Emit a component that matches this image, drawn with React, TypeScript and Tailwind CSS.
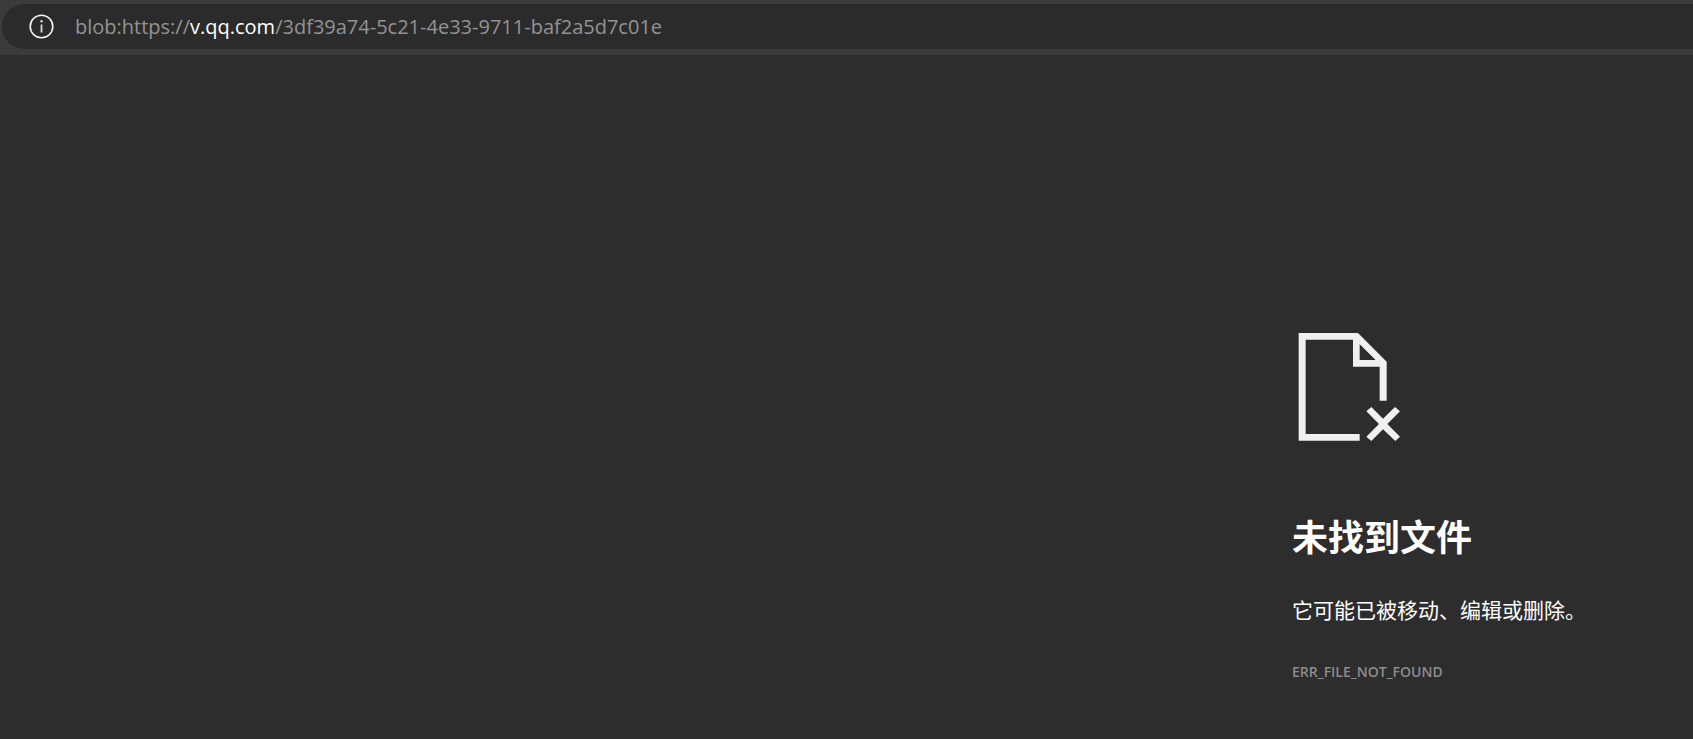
interface AddressParts {
  scheme: string;
  host: string;
  path: string;
}

const address: AddressParts = {
  scheme: "blob:https://",
  host: "v.qq.com",
  path: "/3df39a74-5c21-4e33-9711-baf2a5d7c01e",
};

function InfoIcon() {
  return (
    <svg viewBox="0 0 25 25" className="w-[25px] h-[25px]" fill="none" aria-hidden="true">
      <circle cx="12.5" cy="12.5" r="11.3" stroke="#f4f4f4" strokeWidth="1.6" />
      <path d="M12.5 10.5V18.5" stroke="#d8d8d8" strokeWidth="1.8" />
      <circle cx="12.5" cy="7.3" r="1.2" fill="#d8d8d8" />
    </svg>
  );
}

// Page outline with a folded corner and a cross at the lower right
function MissingFileIcon() {
  return (
    <svg viewBox="36 39 324 324" className="w-[108px] h-[108px]" fill="#f0f0f0" aria-hidden="true">
      <path
        fillRule="evenodd"
        d="M56 39H234L320 125V242H299V140H219V59H77V342H239V362H56ZM239 73V120H287Z"
      />
      <path d="M274 261L309 296L345 261L360 274L322 312L360 350L346 363L309 328L274 363L259 350L297 312L259 274Z" />
    </svg>
  );
}

function AddressBar({ scheme, host, path }: AddressParts) {
  return (
    <header className="bg-[#3b3b3b] pt-1 pb-1.5 pl-0.5">
      <div className="flex items-center h-[45px] pl-[27px] rounded-l-full bg-[#2b2b2b]">
        <button type="button" aria-label="查看站点信息" className="shrink-0">
          <InfoIcon />
        </button>
        <div
          role="textbox"
          aria-label="地址和搜索栏"
          contentEditable
          suppressContentEditableWarning
          spellCheck={false}
          className="flex-1 ml-[21px] text-[20px] leading-7 whitespace-nowrap text-[#939393] outline-none"
        >
          {scheme}
          <span className="text-white">{host}</span>
          {path}
        </div>
      </div>
    </header>
  );
}

export default function App() {
  return (
    <div className="min-h-screen bg-[#2d2d2d] font-['Open_Sans','Noto_Sans_CJK_SC',sans-serif]">
      <AddressBar {...address} />

      <main className="flex justify-end pt-[278px] pb-12">
        <section className="w-[401px]">
          <MissingFileIcon />
          <h1 className="mt-[73px] text-[36px] leading-12 font-bold text-white">未找到文件</h1>
          <p className="mt-[34px] text-[21px] leading-7 text-white">它可能已被移动、编辑或删除。</p>
          <p className="mt-9 text-[14px] leading-6 font-semibold text-[#8c8c8c]">ERR_FILE_NOT_FOUND</p>
        </section>
      </main>
    </div>
  );
}
